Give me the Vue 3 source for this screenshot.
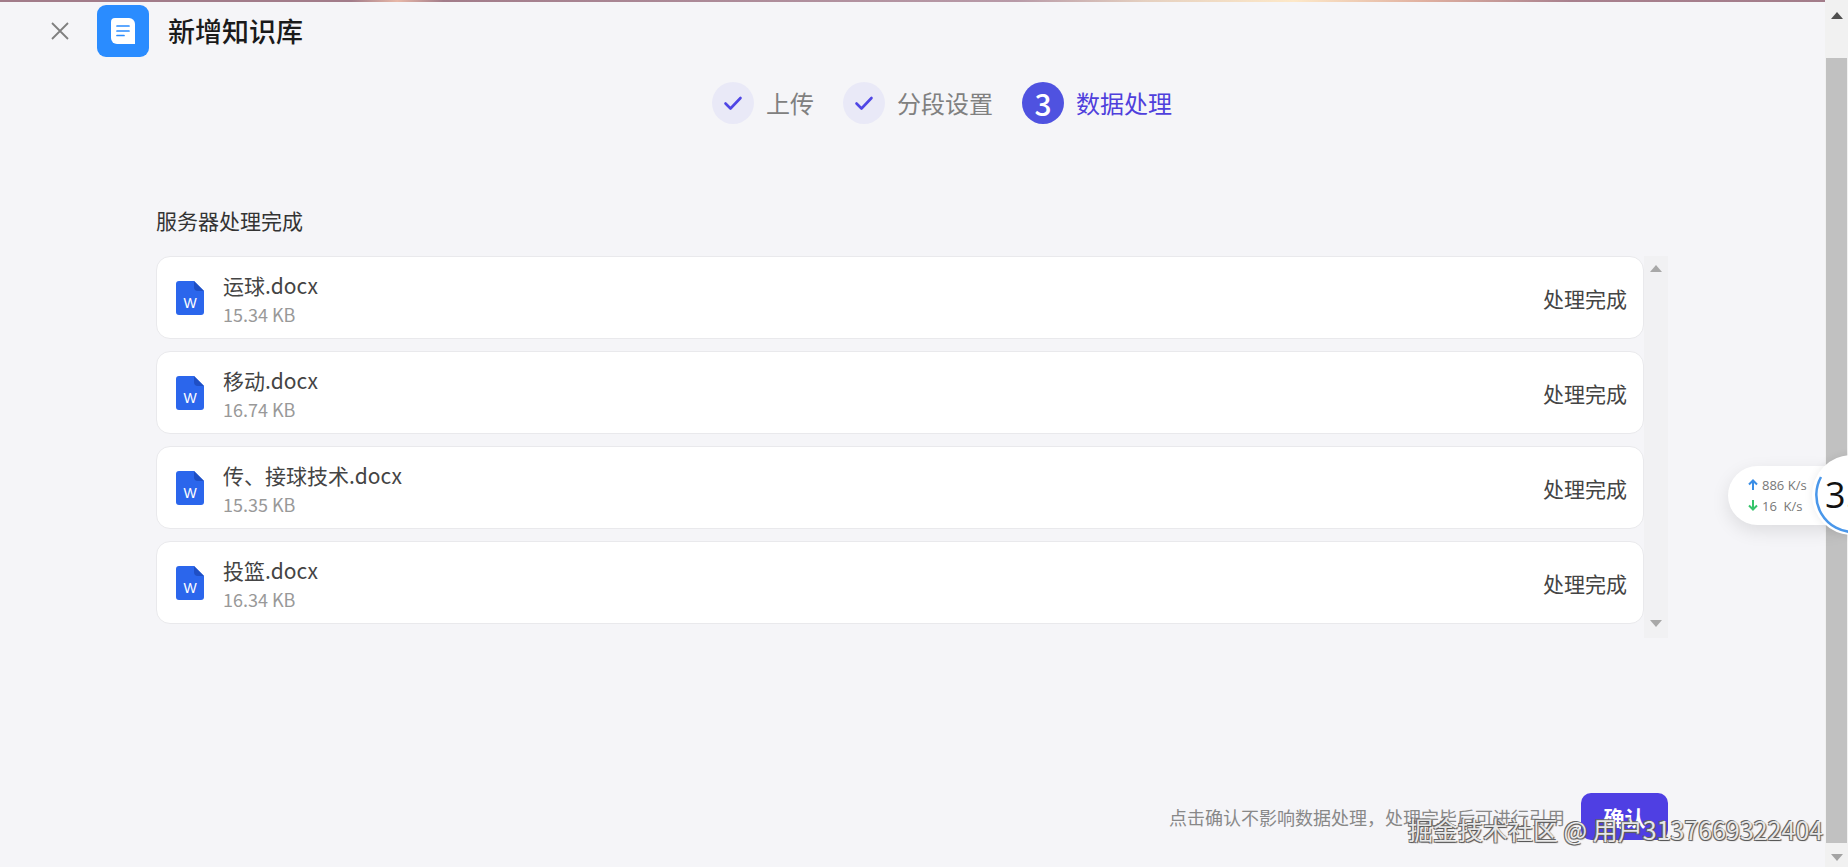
<template>
  <div class="page">
    <div class="topline"></div>
    <div class="main">
      <header class="header">
        <button class="close" aria-label="close">
          <svg width="20" height="20" viewBox="0 0 20 20" fill="none" stroke="#7f7f7f" stroke-width="1.8"><path d="M2 2l16 16M18 2L2 18" /></svg>
        </button>
        <div class="logo">
          <svg width="24" height="26" viewBox="0 0 24 26">
            <path d="M4 0h14a6 6 0 0 1 6 6v20H6a6 6 0 0 1-6-6V4a4 4 0 0 1 4-4z" fill="#fff" />
            <path d="M6 8h12M6 13h12M6 17.500h7" stroke="#2a8cff" stroke-width="1.700" stroke-linecap="round" />
          </svg>
        </div>
        <h1 class="title">新增知识库</h1>
      </header>

      <div class="steps">
        <div v-for="(s, i) in steps" :key="s" class="step" :class="{ active: i === 2 }">
          <span class="dot">
            <template v-if="i === 2">3</template>
            <svg v-else width="20" height="16" viewBox="0 0 20 16" fill="none" stroke="#4f46e5" stroke-width="2.600" stroke-linecap="round" stroke-linejoin="round"><path d="M2.500 8.500l5 5L17.500 3" /></svg>
          </span>
          <span class="step-label">{{ s }}</span>
        </div>
      </div>

      <section class="content">
        <h2 class="section-title">服务器处理完成</h2>
        <div class="list-wrap">
          <div class="list">
            <div v-for="f in files" :key="f.name" class="card">
              <svg class="file-icon" width="28" height="34" viewBox="0 0 28 34">
                <path d="M3 0h15l10 10v21a3 3 0 0 1-3 3H3a3 3 0 0 1-3-3V3a3 3 0 0 1 3-3z" fill="#2b66ec" />
                <path d="M18 0l10 10h-6a4 4 0 0 1-4-4z" fill="#1f4fc4" />
                <text x="14" y="27" text-anchor="middle" class="w">W</text>
              </svg>
              <div class="file-info">
                <div class="file-name">{{ f.name }}</div>
                <div class="file-size">{{ f.size }}</div>
              </div>
              <div class="file-status">处理完成</div>
            </div>
          </div>
          <div class="list-scroll">
            <span class="arrow up"></span>
            <span class="arrow down"></span>
          </div>
        </div>
      </section>

      <footer class="footer">
        <span class="hint">点击确认不影响数据处理&#xFF0C;处理完毕后可进行引用</span>
        <button class="confirm">确认</button>
      </footer>
    </div>

    <div class="page-scroll">
      <span class="sarrow up"></span>
      <span class="thumb"></span>
      <span class="sarrow down"></span>
    </div>

    <div class="speed">
      <div class="rate">
        <svg width="10" height="11" viewBox="0 0 10 11" fill="none" stroke="#3a8ee6" stroke-width="2"><path d="M5 11V2M1 5.500L5 1.500l4 4" /></svg>
        886 K/s
      </div>
      <div class="rate">
        <svg width="10" height="11" viewBox="0 0 10 11" fill="none" stroke="#35c46a" stroke-width="2"><path d="M5 0v9M1 5.500l4 4 4-4" /></svg>
        16&nbsp; K/s
      </div>
    </div>
    <div class="ball">
      <svg class="ring" width="80" height="80" viewBox="0 0 80 80" fill="none">
        <path d="M9 22A37 37 0 0 0 41 77" stroke="#4a97ea" stroke-width="2.500" />
      </svg>
      <span class="ball-num">3.</span>
    </div>

    <div class="watermark">掘金技术社区 @ 用户3137669322404</div>
  </div>
</template>

<script setup>
const steps = ['上传', '分段设置', '数据处理']

const files = [
  { name: '运球.docx', size: '15.34 KB' },
  { name: '移动.docx', size: '16.74 KB' },
  { name: '传、接球技术.docx', size: '15.35 KB' },
  { name: '投篮.docx', size: '16.34 KB' }
]
</script>

<style>
html,
body {
  margin: 0;
  overflow: hidden;
}
</style>

<style scoped>
.page {
  position: relative;
  display: flex;
  width: 1848px;
  height: 867px;
  overflow: hidden;
  background: #f5f5f8;
  color: #333;
  font-family: "Noto Sans CJK SC", "Noto Sans", sans-serif;
}

.topline {
  position: absolute;
  left: 0;
  top: 0;
  width: 100%;
  height: 2px;
  background: linear-gradient(90deg, #a27c8a 0%, #a27c8a 19%, #e8b8a8 21.500%, #a27c8a 24%, #b89aa8 55%, #e5d0c0 62%, #fde8c8 70%, #e0b0a0 77%, #a8808e 85%, #a27c8a 100%);
}

.main {
  flex: 1;
  display: flex;
  flex-direction: column;
  min-width: 0;
}

.header {
  display: flex;
  align-items: center;
  height: 52px;
  padding: 5px 0 0 50px;
}

.close {
  display: flex;
  padding: 0;
  border: none;
  background: none;
}

.logo {
  display: flex;
  align-items: center;
  justify-content: center;
  width: 52px;
  height: 52px;
  margin-left: 27px;
  border-radius: 9px;
  background: #2a8cff;
}

.title {
  margin: 0 0 2px 19px;
  font-size: 27px;
  font-weight: 500;
  color: #1a1a1a;
}

.steps {
  display: flex;
  justify-content: center;
  gap: 29px;
  margin-top: 25px;
  padding-left: 59px;
}

.step {
  display: flex;
  align-items: center;
  gap: 12px;
}

.dot {
  display: flex;
  align-items: center;
  justify-content: center;
  width: 42px;
  height: 42px;
  border-radius: 50%;
  background: #e9e9f7;
  font-size: 30px;
  font-weight: 500;
  color: #fff;
}

.step.active .dot {
  background: #4f52e0;
}

.step-label {
  margin-bottom: 2px;
  font-size: 24px;
  color: #808080;
}

.step.active .step-label {
  color: #4f3fdc;
}

.content {
  padding: 81px 0 0 156px;
}

.section-title {
  margin: 0 0 21px;
  font-size: 21px;
  line-height: 30px;
  font-weight: 400;
  color: #333;
}

.list-wrap {
  display: flex;
  align-items: flex-start;
  width: 1512px;
}

.list {
  flex: 1;
  display: flex;
  flex-direction: column;
  gap: 12px;
}

.card {
  display: flex;
  align-items: center;
  height: 81px;
  padding: 0 16px 0 19px;
  border: 1px solid #e9e9ec;
  border-radius: 14px;
  background: #fff;
}

.file-icon {
  flex: none;
}

.w {
  font: 14px "Liberation Sans", sans-serif;
  fill: #fff;
}

.file-info {
  flex: 1;
  margin-left: 19px;
  padding-top: 2px;
}

.file-name {
  font-size: 21px;
  line-height: 31px;
  color: #444;
}

.file-size {
  font-size: 18px;
  line-height: 26px;
  color: #999;
}

.file-status {
  font-size: 21px;
  color: #444;
}

.list-scroll {
  flex: none;
  display: flex;
  flex-direction: column;
  justify-content: space-between;
  align-items: center;
  width: 24px;
  height: 382px;
  box-sizing: border-box;
  padding: 9px 0 11px;
  background: #f1f1f3;
}

.arrow {
  width: 0;
  height: 0;
  border-left: 6px solid transparent;
  border-right: 6px solid transparent;
}

.arrow.up {
  border-bottom: 7px solid #a8a8a8;
}

.arrow.down {
  border-top: 7px solid #a8a8a8;
}

.footer {
  display: flex;
  align-items: center;
  justify-content: flex-end;
  gap: 16px;
  margin-top: auto;
  padding: 0 157px 27px 0;
}

.hint {
  font-size: 18px;
  color: #888;
}

.confirm {
  width: 87px;
  height: 47px;
  border: none;
  border-radius: 10px;
  background: #4f3fe3;
  color: #fff;
  font: 700 21px "Noto Sans CJK SC", sans-serif;
}

.page-scroll {
  flex: none;
  position: relative;
  display: flex;
  flex-direction: column;
  align-items: center;
  justify-content: space-between;
  width: 23px;
  padding: 12px 0 6px;
  box-sizing: border-box;
  background: #f1f1f1;
}

.thumb {
  position: absolute;
  top: 58px;
  left: 1px;
  width: 21px;
  height: 785px;
  background: #c1c1c1;
}

.sarrow {
  width: 0;
  height: 0;
  border-left: 6px solid transparent;
  border-right: 6px solid transparent;
}

.sarrow.up {
  border-bottom: 7px solid #505050;
}

.sarrow.down {
  border-top: 7px solid #a3a3a3;
}

.speed {
  position: absolute;
  left: 1728px;
  top: 466px;
  width: 130px;
  height: 59px;
  box-sizing: border-box;
  padding: 8px 0 0 20px;
  border-radius: 30px;
  background: #fff;
  box-shadow: 0 6px 18px rgba(0, 0, 0, 0.1);
}

.rate {
  display: flex;
  align-items: center;
  gap: 4px;
  height: 21px;
  font: 13px "Open Sans", sans-serif;
  color: #777;
}

.ball {
  position: absolute;
  left: 1812px;
  top: 455px;
  width: 80px;
  height: 80px;
  border-radius: 50%;
  background: #fff;
  box-shadow: 0 0 8px rgba(0, 0, 0, 0.08);
}

.ring {
  position: absolute;
  left: 0;
  top: 0;
}

.ball-num {
  position: absolute;
  left: 13px;
  top: 14px;
  font: 36px/52px "Open Sans", sans-serif;
  letter-spacing: 0;
  color: #111;
}

.watermark {
  position: absolute;
  left: 1408px;
  top: 811px;
  font-size: 25px;
  line-height: 36px;
  white-space: nowrap;
  color: rgba(255, 255, 255, 0.85);
  text-shadow: -1px -1px 0 #666, 1px 1px 1px #555, -1px 1px 0 #777;
}
</style>
